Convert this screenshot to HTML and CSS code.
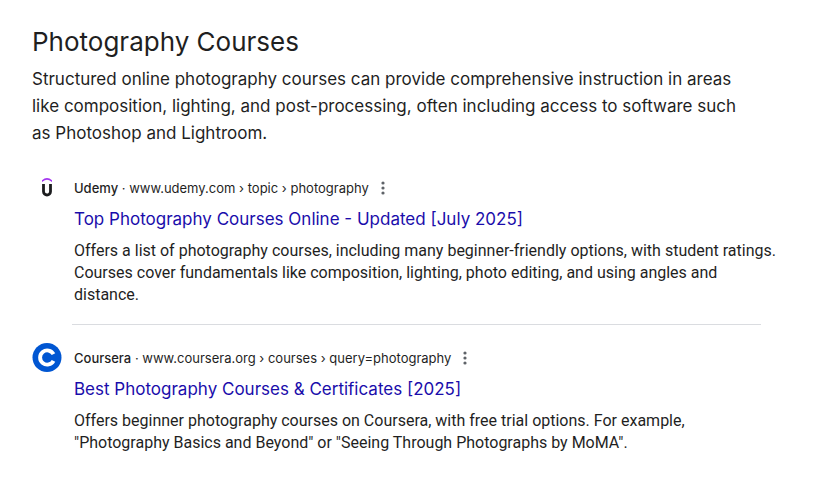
FILE: index.html
```html
<!DOCTYPE html>
<html lang="en">
<head>
<meta charset="utf-8">
<meta name="viewport" content="width=device-width, initial-scale=1">
<title>Photography Courses</title>
<link rel="stylesheet" href="styles.css">
</head>
<body>
<main class="overview">
  <h2 class="heading">Photography Courses</h2>
  <p class="intro">Structured online photography courses can provide comprehensive instruction in areas like composition, lighting, and post-processing, often including access to software such as Photoshop and Lightroom.</p>
  <article class="result">
    <svg class="logo" viewBox="0 0 30 30" aria-hidden="true">
      <path d="M10 9V7.300Q12.500 5 15 5T20 7.300V9Q17 6.800 15 6.800T10 9z" fill="#a435f0"/>
      <path d="M11.500 11v7.500a3.500 3.500 0 0 0 7 0V11" fill="none" stroke="#1c1d1f" stroke-width="2.800"/>
    </svg>
    <div class="body">
      <div class="source">
        <cite class="site"><span class="name">Udemy</span> · www.udemy.com › topic › photography</cite>
        <button class="more" type="button" aria-label="About this result"><svg viewBox="0 0 4 14"><circle cx="2" cy="2" r="1.600"/><circle cx="2" cy="7" r="1.600"/><circle cx="2" cy="12" r="1.600"/></svg></button>
      </div>
      <h3 class="title"><a href="#udemy">Top Photography Courses Online - Updated [July 2025]</a></h3>
      <p class="snippet">Offers a list of photography courses, including many beginner-friendly options, with student ratings. Courses cover fundamentals like composition, lighting, photo editing, and using angles and distance.</p>
    </div>
  </article>
  <hr class="divider">
  <article class="result">
    <svg class="logo" viewBox="0 0 30 30" aria-hidden="true">
      <circle cx="15" cy="14.500" r="14.500" fill="#0056d2"/>
      <path d="M21.500 11.200a7.100 7.100 0 1 0 0 6.600" fill="none" stroke="#fff" stroke-width="3.900"/>
    </svg>
    <div class="body">
      <div class="source">
        <cite class="site"><span class="name">Coursera</span> · www.coursera.org › courses › query=photography</cite>
        <button class="more" type="button" aria-label="About this result"><svg viewBox="0 0 4 14"><circle cx="2" cy="2" r="1.600"/><circle cx="2" cy="7" r="1.600"/><circle cx="2" cy="12" r="1.600"/></svg></button>
      </div>
      <h3 class="title"><a href="#coursera">Best Photography Courses &amp; Certificates [2025]</a></h3>
      <p class="snippet">Offers beginner photography courses on Coursera, with free trial options. For example, "Photography Basics and Beyond" or "Seeing Through Photographs by MoMA".</p>
    </div>
  </article>
</main>
</body>
</html>
```
FILE: styles.css
```css
* { box-sizing: border-box; }
body { margin: 0; background: #fff; color: #1f1f1f; font-family: Inter, "Open Sans", sans-serif; }
.overview { padding: 24px 52px 24px 32px; }
.heading { margin: 0 0 6px; font-size: 26px; line-height: 36px; font-weight: 400; }
.intro { margin: 0 0 26px; padding-right: 32px; font-size: 17px; line-height: 27px; }
.result { display: flex; gap: 12px; }
.divider { margin: 18px 18px 18px 40px; border: 0; border-top: 1px solid #dadce0; }
.logo { flex: none; width: 30px; height: 30px; }
.body { flex: 1; }
.source { display: flex; align-items: center; gap: 12px; height: 30px; }
.site { font-size: 13px; font-style: normal; }
.name { font-weight: 500; }
.more { display: flex; padding: 0; border: 0; background: none; }
.more svg { width: 4px; height: 14px; fill: #5f6368; }
.title { margin: 3px 0 7px; font-size: 17px; line-height: 27px; font-weight: 400; }
.title a { color: #1a0dab; text-decoration: none; }
.snippet { margin: 0; font-family: Roboto, sans-serif; font-size: 16px; line-height: 22px; }
```
